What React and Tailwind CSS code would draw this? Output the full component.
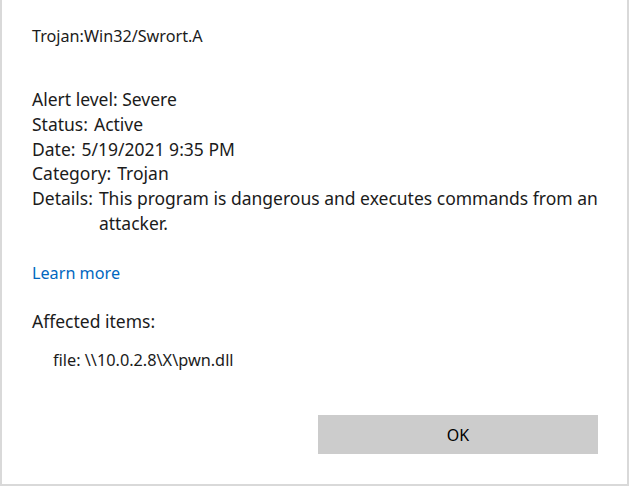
import React from "react";

const rows = [
  { label: "Status:", value: "Active" },
  { label: "Date:", value: "5/19/2021 9:35 PM" },
  { label: "Category:", value: "Trojan" },
  {
    label: "Details:",
    value: "This program is dangerous and executes commands from an attacker.",
  },
];

const App = () => {
  return (
    <div
      className="h-[486px] w-[629px] bg-white text-[#1b1b1b] border-l-2 border-r-2 border-b-2 border-[#d9d9d9] flex flex-col"
      style={{ fontFamily: '"Noto Sans", "Open Sans", sans-serif' }}
    >
      <div className="pl-[30px] pr-[24px] pt-[25px] flex-1 flex flex-col">
        <div className="text-[16.2px] leading-[22px]">Trojan:Win32/Swrort.A</div>

        <div className="mt-[40px] text-[17.5px] leading-[24.8px]">
          <div>Alert level: Severe</div>
          {rows.map((row) => (
            <div key={row.label} className="flex gap-[6px]">
              <span className="shrink-0">{row.label}</span>
              <span>{row.value}</span>
            </div>
          ))}
        </div>

        <a className="mt-[26px] text-[16.2px] leading-[22px] text-[#0067c0] cursor-pointer">
          Learn more
        </a>

        <div className="mt-[26px] text-[17.5px] leading-[22px]">Affected items:</div>
        <div className="mt-[17px] pl-[21px] text-[16.3px] leading-[22px]">
          file: \\10.0.2.8\X\pwn.dll
        </div>

        <div className="mt-auto mb-[30px] mr-[5px] flex justify-end">
          <button className="w-[280px] h-[39px] bg-[#cccccc] text-[16px] text-black">
            OK
          </button>
        </div>
      </div>
    </div>
  );
};

export default App;
